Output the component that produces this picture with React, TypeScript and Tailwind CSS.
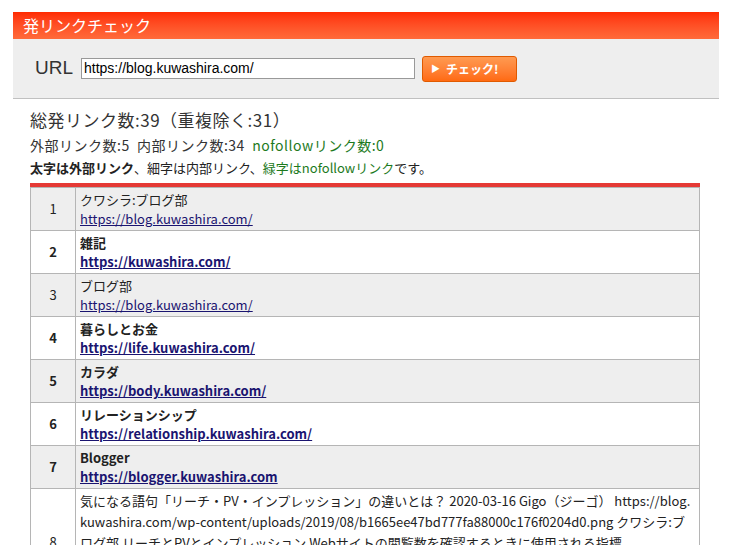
export default function App() {
  const f = { fontFamily: '"Noto Sans CJK JP", "Liberation Sans", sans-serif' };
  const rows: [string, string, string, boolean][] = [
    ["1", "クワシラ:ブログ部", "https://blog.kuwashira.com/", false],
    ["2", "雑記", "https://kuwashira.com/", true],
    ["3", "ブログ部", "https://blog.kuwashira.com/", false],
    ["4", "暮らしとお金", "https://life.kuwashira.com/", true],
    ["5", "カラダ", "https://body.kuwashira.com/", true],
    ["6", "リレーションシップ", "https://relationship.kuwashira.com/", true],
    ["7", "Blogger", "https://blogger.kuwashira.com", true],
  ];
  return (
    <div className="w-[732px] h-[545px] overflow-hidden bg-white text-[#222]" style={f}>
      <div className="mx-[13px] mt-[12px] h-[27px] bg-gradient-to-b from-[#ff2a00] to-[#ff6a3a] text-white text-[16px] leading-[27px] pl-[10px]">発リンクチェック</div>
      <div className="mx-[13px] h-[60px] bg-[#eeeeee] border-b border-[#c0c0c0] flex items-center pl-[22px]">
        <span className="text-[19px] text-[#333] mr-[8px]" style={{ fontFamily: '"Liberation Sans", sans-serif' }}>URL</span>
        <div className="w-[334px] h-[21px] border border-[#999] bg-white text-[14px] leading-[19px] px-[2px] text-black" style={{ fontFamily: '"Liberation Sans", sans-serif' }}>https://blog.kuwashira.com/</div>
        <div className="ml-[7px] w-[95px] h-[26px] rounded-[3px] bg-gradient-to-b from-[#ff9a50] to-[#ff6a10] border border-[#e05a00] text-white text-[12px] font-bold flex items-center pl-[8px] gap-[6px]">
          <span className="text-[9px]">▶</span><span>チェック!</span>
        </div>
      </div>
      <div className="ml-[30px] mt-[10px] text-[17px] text-[#333] leading-[22px] tracking-[0.5px]">総発リンク数:39（重複除く:31）</div>
      <div className="ml-[30px] mt-[5px] text-[14px] text-[#333] leading-[18px] tracking-[0.5px]">外部リンク数:5&nbsp;&nbsp;内部リンク数:34&nbsp;&nbsp;<span className="text-[#1d7a1d]">nofollowリンク数:0</span></div>
      <div className="ml-[30px] mt-[5px] text-[13px] text-[#222] leading-[17px]"><b>太字は外部リンク</b>、細字は内部リンク、<span className="text-[#1d7a1d]">緑字はnofollowリンク</span>です。</div>
      <div className="ml-[30px] w-[670px] mt-[7px] border-t-[4px] border-[#e53935]">
        <table className="w-full border-collapse text-[13px]">
          <tbody>
            {rows.map(([n, t, u, b], i) => (
              <tr key={n} className={i % 2 === 0 ? "bg-[#eeeeee]" : "bg-white"}>
                <td className={`w-[45px] h-[43px] border border-[#b5b5b5] text-center ${b ? "font-bold" : ""}`}>{n}</td>
                <td className={`border border-[#b5b5b5] pl-[4px] leading-[19px] ${b ? "font-bold" : ""}`}>
                  <div>{t}</div>
                  <div><span className="text-[#1a1470] underline">{u}</span></div>
                </td>
              </tr>
            ))}
            <tr className="bg-white">
              <td className="w-[45px] border border-[#b5b5b5] text-center align-bottom pb-[2px]">8</td>
              <td className="border border-[#b5b5b5] pl-[4px] pr-[4px] pt-[1px] leading-[21px] break-all">
                気になる語句「リーチ・PV・インプレッション」の違いとは？ 2020-03-16 Gigo（ジーゴ） https://blog.kuwashira.com/wp-content/uploads/2019/08/b1665ee47bd777fa88000c176f0204d0.png クワシラ:ブログ部 リーチとPVとインプレッション Webサイトの閲覧数を確認するときに使用される指標
              </td>
            </tr>
          </tbody>
        </table>
      </div>
    </div>
  );
}
